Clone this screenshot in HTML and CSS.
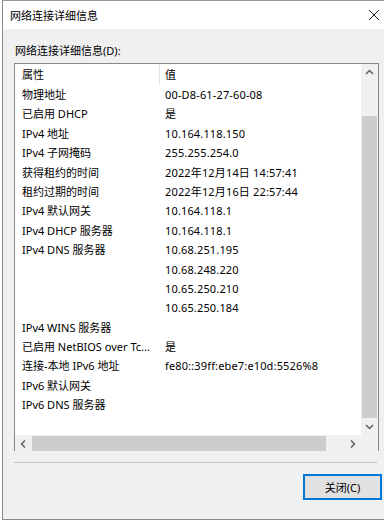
FILE: index.html
```html
<html>
<head>
<title>网络连接详细信息</title>
<link rel="stylesheet" href="styles.css">
</head>
<body>

<div class="window">
	<div class="titlebar">
		<span class="title">网络连接详细信息</span>
		<svg class="closeicon" width="12" height="12" viewBox="0 0 12 12"><path d="M1 1L11 11M11 1L1 11" stroke="#222" stroke-width="1"/></svg>
	</div>

	<div class="content">
		<div class="caption">网络连接详细信息(D):</div>

		<div class="listbox">
			<div class="listarea">
				<div class="row header">
					<div class="cell name">属性</div>
					<div class="cell value headvalue">值</div>
				</div>
				<div class="row"><div class="cell name">物理地址</div><div class="cell value">00-D8-61-27-60-08</div></div>
				<div class="row"><div class="cell name">已启用 DHCP</div><div class="cell value">是</div></div>
				<div class="row"><div class="cell name">IPv4 地址</div><div class="cell value">10.164.118.150</div></div>
				<div class="row"><div class="cell name">IPv4 子网掩码</div><div class="cell value">255.255.254.0</div></div>
				<div class="row"><div class="cell name">获得租约的时间</div><div class="cell value">2022年12月14日 14:57:41</div></div>
				<div class="row"><div class="cell name">租约过期的时间</div><div class="cell value">2022年12月16日 22:57:44</div></div>
				<div class="row"><div class="cell name">IPv4 默认网关</div><div class="cell value">10.164.118.1</div></div>
				<div class="row"><div class="cell name">IPv4 DHCP 服务器</div><div class="cell value">10.164.118.1</div></div>
				<div class="row"><div class="cell name">IPv4 DNS 服务器</div><div class="cell value">10.68.251.195</div></div>
				<div class="row"><div class="cell name"></div><div class="cell value">10.68.248.220</div></div>
				<div class="row"><div class="cell name"></div><div class="cell value">10.65.250.210</div></div>
				<div class="row"><div class="cell name"></div><div class="cell value">10.65.250.184</div></div>
				<div class="row"><div class="cell name">IPv4 WINS 服务器</div><div class="cell value"></div></div>
				<div class="row"><div class="cell name">已启用 NetBIOS over Tc...</div><div class="cell value">是</div></div>
				<div class="row"><div class="cell name">连接-本地 IPv6 地址</div><div class="cell value">fe80::39ff:ebe7:e10d:5526%8</div></div>
				<div class="row"><div class="cell name">IPv6 默认网关</div><div class="cell value"></div></div>
				<div class="row"><div class="cell name">IPv6 DNS 服务器</div><div class="cell value"></div></div>
			</div>

			<div class="vscroll">
				<svg class="arrow" width="17" height="17" viewBox="0 0 17 17"><polyline points="5,10 8.5,6.5 12,10" fill="none" stroke="#606060" stroke-width="1.5"/></svg>
				<div class="vtrack"><div class="vthumb"></div></div>
				<svg class="arrow" width="17" height="17" viewBox="0 0 17 17"><polyline points="5,7 8.5,10.5 12,7" fill="none" stroke="#606060" stroke-width="1.5"/></svg>
			</div>

			<div class="hscroll">
				<svg class="arrow" width="17" height="16" viewBox="0 0 17 16"><polyline points="10,4.5 6.5,8 10,11.5" fill="none" stroke="#606060" stroke-width="1.5"/></svg>
				<div class="htrack"><div class="hthumb"></div></div>
				<svg class="arrow" width="17" height="16" viewBox="0 0 17 16"><polyline points="7,4.5 10.5,8 7,11.5" fill="none" stroke="#606060" stroke-width="1.5"/></svg>
			</div>

			<div class="corner"></div>
		</div>

		<div class="separator"></div>

		<div class="buttonrow">
			<button class="closebutton">关闭(C)</button>
		</div>
	</div>
</div>

</body>
</html>
```

FILE: styles.css
```css
body { margin: 0; background-color: #ffffff; font-family: "Noto Sans", "Noto Sans CJK SC", sans-serif; font-size: 11px; color: #000000; }

.window
{
	margin-left: 2px;
	width: 382px;
	height: 518px;
	border-top: 1px solid #9a9a9a;
	border-left: 1px solid #8a8a8a;
	border-bottom: 1px solid #8a8a8a;
	background-color: #f0f0f0;
	display: flex;
	flex-direction: column;
}

.titlebar
{
	height: 28px;
	background-color: #ffffff;
	display: flex;
	align-items: center;
	justify-content: space-between;
	padding: 0 3px 0 7px;
}
.title { font-size: 11px; color: #000000; }
.closeicon { margin-right: 2px; }

.content
{
	padding: 0 3px 0 11px;
	display: flex;
	flex-direction: column;
}

.caption { height: 20px; line-height: 20px; margin-top: 12px; margin-left: 1px; }

.listbox
{
	margin-top: 2px;
	width: 363px;
	height: 386px;
	border: 1px solid #828790;
	background-color: #ffffff;
	display: grid;
	grid-template-columns: 1fr 17px;
	grid-template-rows: 1fr 17px;
}

.listarea { overflow: hidden; }

.row { display: flex; height: 19.4px; line-height: 19.4px; }
.header { height: 21px; line-height: 21px; }
.cell { white-space: nowrap; overflow: hidden; }
.name { width: 137px; padding-left: 7px; }
.value { padding-left: 6px; letter-spacing: 0.15px; }
.headvalue { border-left: 1px solid #e5e5e5; padding-left: 5px; }

.vscroll { background-color: #f0f0f0; display: flex; flex-direction: column; }
.vtrack { flex: 1; padding: 35px 1px 0 1px; }
.vthumb { height: 302px; background-color: #cdcdcd; }

.hscroll { background-color: #f0f0f0; display: flex; align-items: center; }
.htrack { flex: 1; height: 16px; }
.hthumb { width: 294px; height: 15px; background-color: #cdcdcd; }

.arrow { display: block; flex: none; }
.corner { background-color: #f0f0f0; }

.separator { margin-top: 11px; width: 363px; border-top: 1px solid #c4c4c4; }

.buttonrow { display: flex; justify-content: flex-end; margin-top: 11px; }
.closebutton
{
	width: 79px;
	height: 26px;
	border: 2px solid #0078d7;
	background-color: #e1e1e1;
	font-family: "Noto Sans", "Noto Sans CJK SC", sans-serif;
	font-size: 11px;
	color: #000000;
	padding: 0;
}
```
